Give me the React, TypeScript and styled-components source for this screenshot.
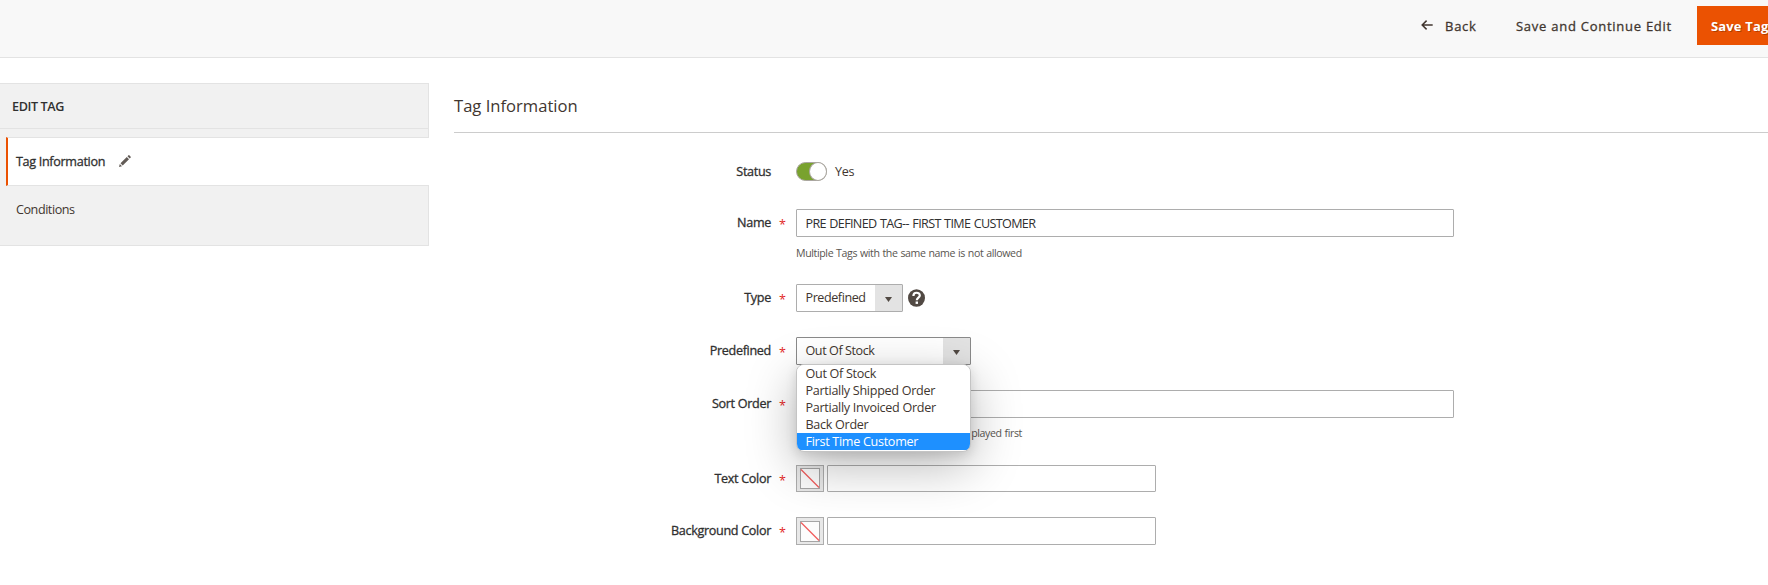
import React from 'react';
import styled, { createGlobalStyle, css } from 'styled-components';

const GlobalStyle = createGlobalStyle`
  * { box-sizing: border-box; }
  html, body { margin: 0; padding: 0; overflow: hidden; }
  body {
    background: #fff;
    color: #41362f;
    font-family: "Open Sans", "Noto Sans", sans-serif;
    font-size: 12.6px;
  }
`;

const medium = css`
  font-weight: 400;
  -webkit-text-stroke: 0.3px currentColor;
`;

const Page = styled.div`
  width: 1768px;
  height: 585px;
  overflow: hidden;
`;

const Toolbar = styled.header`
  display: flex;
  height: 58px;
  padding: 6px 0 0 1421px;
  align-items: flex-start;
  background: #f8f8f8;
  border-bottom: 1px solid #e3e3e3;
`;

const ToolbarButton = styled.button<{ $primary?: boolean; $width: number }>`
  flex: none;
  display: flex;
  align-items: center;
  width: ${p => p.$width}px;
  height: 39px;
  padding: 0;
  border: 0;
  background: none;
  color: #41362f;
  font: 400 13px "Open Sans", sans-serif;
  ${medium}
  letter-spacing: 0.74px;
  white-space: nowrap;
  ${p => p.$primary && css`
    padding-left: 14px;
    background: #eb5202;
    color: #fff;
    font-weight: 700;
    -webkit-text-stroke: 0;
    letter-spacing: 0.15px;
    text-shadow: 1px 1px 0 rgba(0, 0, 0, 0.25);
  `}
`;

const BackArrow = styled.svg`
  margin: -2px 12px 0 0;
`;

const Columns = styled.main`
  display: flex;
  align-items: flex-start;
  padding-top: 25px;
`;

const Sidebar = styled.nav`
  flex: none;
  width: 429px;
  margin-right: 25px;
  background: #f1f1f1;
  border: solid #e3e3e3;
  border-width: 1px 0;
`;

const SidebarTitle = styled.div`
  height: 45px;
  padding-left: 12px;
  border: solid #e3e3e3;
  border-width: 0 1px 1px 0;
  color: #303030;
  font-weight: 600;
  line-height: 45px;
  letter-spacing: -0.4px;
`;

const SidebarGap = styled.div<{ $height: number }>`
  height: ${p => p.$height}px;
  border-right: 1px solid #e3e3e3;
`;

const SidebarItem = styled.a<{ $active?: boolean }>`
  display: flex;
  align-items: center;
  height: 49px;
  padding: 0 0 2px 16px;
  border-right: 1px solid #e3e3e3;
  letter-spacing: -0.45px;
  ${p => p.$active && css`
    margin-left: 6px;
    padding: 0 0 0 8px;
    background: #fff;
    border: solid #e3e3e3;
    border-width: 1px 0;
    border-left: 2px solid #eb5202;
    color: #303030;
    ${medium}
    letter-spacing: -0.32px;
  `}
`;

const Pencil = styled.svg`
  margin: -1px 0 0 14px;
`;

const Content = styled.section`
  flex: 1;
  min-width: 0;
`;

const Title = styled.h2`
  margin: 0 0 29px;
  height: 50px;
  border-bottom: 1px solid #ccc;
  font-weight: 400;
  font-size: 16.6px;
  line-height: 46px;
`;

const Field = styled.div<{ $height: number }>`
  display: flex;
  align-items: flex-start;
  height: ${p => p.$height}px;
`;

const Label = styled.label<{ $short?: boolean }>`
  flex: none;
  width: 317px;
  margin-right: 8px;
  color: #303030;
  ${medium}
  line-height: ${p => (p.$short ? 20 : 28)}px;
  letter-spacing: -0.32px;
  text-align: right;
  white-space: nowrap;
`;

const Mark = styled.span`
  flex: none;
  width: 17px;
  color: #e22626;
  line-height: 31px;
`;

const Control = styled.div`
  position: relative;
`;

const Row = styled.div`
  display: flex;
  align-items: center;
  letter-spacing: -0.3px;
`;

const Toggle = styled.span`
  display: flex;
  justify-content: flex-end;
  width: 31px;
  height: 19px;
  margin-right: 8px;
  border: 1px solid #aaa6a0;
  border-radius: 10px;
  background: #79a22e;
`;

const Knob = styled.span`
  width: 18px;
  height: 19px;
  margin: -1px -1px 0 0;
  border: 1px solid #aaa6a0;
  border-radius: 50%;
  background: #fff;
`;

const Input = styled.input<{ $width: number; $height?: number }>`
  display: block;
  width: ${p => p.$width}px;
  height: ${p => p.$height ?? 28}px;
  padding: 0 8.5px 0;
  border: 1px solid #adadad;
  border-radius: 1px;
  background: transparent;
  color: #303030;
  font: 400 12.6px "Open Sans", sans-serif;
  letter-spacing: -0.65px;
  word-spacing: 0.8px;
`;

const Note = styled.p<{ $indent?: boolean }>`
  margin: ${p => (p.$indent ? 7 : 8)}px 0 0;
  width: 226px;
  color: #595550;
  font-size: 10.6px;
  line-height: 16px;
  letter-spacing: -0.38px;
  word-spacing: 0.5px;
  white-space: nowrap;
  text-align: ${p => (p.$indent ? 'right' : 'left')};
`;

const Select = styled.div<{ $width: number; $open?: boolean }>`
  display: flex;
  justify-content: space-between;
  width: ${p => p.$width}px;
  height: 28px;
  padding-left: 8.500px;
  border: 1px solid ${p => (p.$open ? '#8a8a8a' : '#adadad')};
  border-radius: 1px;
  background: #fff;
  line-height: 26px;
  letter-spacing: -0.44px;
`;

const SelectArrow = styled.span`
  display: flex;
  align-items: center;
  justify-content: center;
  width: 27px;
  padding-top: 2px;
  background: #e3e3e3;
`;

const Help = styled.svg`
  margin: -1px 0 0 5px;
`;

const Options = styled.ul`
  position: absolute;
  z-index: 1;
  top: 27px;
  left: 0;
  width: 175px;
  height: 88px;
  margin: 0;
  padding: 0;
  list-style: none;
  overflow: hidden;
  border: 1px solid #c4c4c4;
  border-radius: 8px;
  background: #fff;
  box-shadow: 0 14px 50px rgba(0, 0, 0, 0.28), 0 3px 12px rgba(0, 0, 0, 0.12);
`;

const Option = styled.li<{ $selected?: boolean }>`
  height: 17px;
  padding-left: 8.500px;
  line-height: 18px;
  letter-spacing: -0.3px;
  background: ${p => (p.$selected ? '#1e90ff' : '#fff')};
  color: ${p => (p.$selected ? '#fff' : '#41362f')};
`;

const Swatch = styled.span<{ $height: number }>`
  display: flex;
  align-items: center;
  justify-content: center;
  width: 28px;
  height: ${p => p.$height}px;
  margin-right: 3px;
  border: 1px solid #adadad;
  background: rgba(0, 0, 0, 0.09);
`;

const Triangle = () => (
  <SelectArrow>
    <svg width="7" height="5" viewBox="0 0 7 5"><path d="M0 0h7L3.500 5z" fill="#514943" /></svg>
  </SelectArrow>
);

const ColorField = ({ height = 28 }: { height?: number }) => (
  <Row>
    <Swatch $height={height}>
      <svg width="20" height="21" viewBox="0 0 20 21">
        <rect x=".5" y=".5" width="19" height="20" fill="#fff" fillOpacity=".85" stroke="#a5a5a5" />
        <path d="M1 1.500l18 18" stroke="#f05a5a" strokeWidth="1.200" />
      </svg>
    </Swatch>
    <Input $width={329} $height={height} />
  </Row>
);

const options = ['Out Of Stock', 'Partially Shipped Order', 'Partially Invoiced Order', 'Back Order', 'First Time Customer'];

export default function App() {
  return (
    <Page>
      <GlobalStyle />
      <Toolbar>
        <ToolbarButton $width={95}>
          <BackArrow width="12" height="10" viewBox="0 0 12 10" fill="none" stroke="#41362f" strokeWidth="1.500">
            <path d="M11.700 5H1M5.600.6L1.200 5l4.400 4.400" />
          </BackArrow>
          Back
        </ToolbarButton>
        <ToolbarButton $width={181}>Save and Continue Edit</ToolbarButton>
        <ToolbarButton $width={71} $primary>Save Tag</ToolbarButton>
      </Toolbar>
      <Columns>
        <Sidebar>
          <SidebarTitle>EDIT TAG</SidebarTitle>
          <SidebarGap $height={8} />
          <SidebarItem $active>
            Tag Information
            <Pencil width="12" height="12" viewBox="0 0 12 12" fill="#625b56">
              <path d="M0 12l.8-3L3 11.200zM1.500 8.300l6.300-6.300 2.200 2.200-6.300 6.300zM8.500 1.300l1-1q.4-.4.8 0l1.400 1.400q.4.400 0 .8l-1 1z" />
            </Pencil>
          </SidebarItem>
          <SidebarItem>Conditions</SidebarItem>
          <SidebarGap $height={10} />
        </Sidebar>
        <Content>
          <Title>Tag Information</Title>
          <Field $height={47}>
            <Label $short>Status</Label>
            <Mark />
            <Row><Toggle><Knob /></Toggle>Yes</Row>
          </Field>
          <Field $height={75}>
            <Label>Name</Label>
            <Mark>*</Mark>
            <Control>
              <Input $width={658} defaultValue="PRE DEFINED TAG-- FIRST TIME CUSTOMER" />
              <Note>Multiple Tags with the same name is not allowed</Note>
            </Control>
          </Field>
          <Field $height={53}>
            <Label>Type</Label>
            <Mark>*</Mark>
            <Row>
              <Select $width={107}>Predefined<Triangle /></Select>
              <Help width="17" height="18" viewBox="0 0 17 18">
                <ellipse cx="8.500" cy="9" rx="8.500" ry="8.700" fill="#514943" />
                <path d="M5.400 6.900c0-4.200 6.400-4 6.400-.4 0 2.200-3 2.200-3 4.800" fill="none" stroke="#fff" strokeWidth="2.200" />
                <rect x="7.600" y="12.500" width="2.400" height="2.400" fill="#fff" />
              </Help>
            </Row>
          </Field>
          <Field $height={53}>
            <Label>Predefined</Label>
            <Mark>*</Mark>
            <Control>
              <Select $width={175} $open>Out Of Stock<Triangle /></Select>
              <Options>
                {options.map((o, i) => <Option key={o} $selected={i === 4}>{o}</Option>)}
              </Options>
            </Control>
          </Field>
          <Field $height={75}>
            <Label>Sort Order</Label>
            <Mark>*</Mark>
            <Control>
              <Input $width={658} />
              <Note $indent>played first</Note>
            </Control>
          </Field>
          <Field $height={52}>
            <Label>Text Color</Label>
            <Mark>*</Mark>
            <ColorField height={27} />
          </Field>
          <Field $height={28}>
            <Label>Background Color</Label>
            <Mark>*</Mark>
            <ColorField />
          </Field>
        </Content>
      </Columns>
    </Page>
  );
}
